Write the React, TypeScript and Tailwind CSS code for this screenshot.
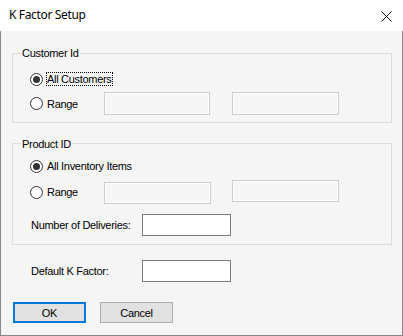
import React from "react";

const Radio = ({ checked }: { checked?: boolean }) => (
  <span className="w-[13px] h-[13px] rounded-full border border-[#333333] bg-white flex items-center justify-center shrink-0">
    {checked && <span className="w-[7px] h-[7px] rounded-full bg-[#333333]" />}
  </span>
);

const DisabledBox = ({ w, extra = "" }: { w: string; extra?: string }) => (
  <div className={`${w} ${extra} border border-[#cccccc] shrink-0`}>
    <div className="w-full h-full border border-white bg-[#f5f5f5]" />
  </div>
);

export default function App() {
  return (
    <div
      className="w-[403px] h-[336px] bg-[#f5f5f5] flex flex-col text-[11px] text-black tracking-[-0.3px]"
      style={{ fontFamily: '"Liberation Sans", Arial, sans-serif' }}
    >
      {/* Title bar */}
      <div className="h-[31px] bg-white flex items-center shrink-0 relative">
        <span
          className="pl-[9px] text-[12px] tracking-[-0.35px] leading-[16px] -mt-[1px]"
          style={{ fontFamily: '"Segoe UI", "Noto Sans", sans-serif' }}
        >
          K Factor Setup
        </span>
        <svg
          className="absolute left-[381px] top-[11px]"
          width="11"
          height="11"
          viewBox="0 0 11 11"
        >
          <path d="M0.5 0.5 L10.5 10.5 M10.5 0.5 L0.5 10.5" stroke="#111" strokeWidth="1" />
        </svg>
      </div>

      {/* Body */}
      <div className="flex-1 flex flex-col border-x border-b border-[#888888]">
        {/* Customer Id group */}
        <div className="relative mt-[22px] ml-[11px] w-[380px] h-[70px] border border-[#dcdcdc] flex flex-col">
          <span className="absolute left-[8px] top-[-7px] px-px bg-[#f5f5f5] leading-[13px]">
            Customer Id
          </span>
          <div className="mt-[18px] pl-[17px] h-[14px] flex items-center">
            <Radio checked />
            <span className="ml-[3px] border border-dotted border-black leading-[12px]">
              All Customers
            </span>
          </div>
          <div className="mt-[6px] pl-[17px] h-[23px] flex items-center">
            <Radio />
            <span className="ml-[4px] w-[57px] leading-[14px]">Range</span>
            <DisabledBox w="w-[106px] h-[23px]" />
            <DisabledBox w="w-[107px] h-[23px]" extra="ml-[22px]" />
          </div>
        </div>

        {/* Product ID group */}
        <div className="relative mt-[20px] ml-[11px] w-[380px] h-[102px] border border-[#dcdcdc] flex flex-col">
          <span className="absolute left-[8px] top-[-6px] px-px bg-[#f5f5f5] leading-[13px]">
            Product ID
          </span>
          <div className="mt-[15px] pl-[17px] h-[14px] flex items-center">
            <Radio checked />
            <span className="ml-[4px] leading-[14px]">All Inventory Items</span>
          </div>
          <div className="mt-[7px] pl-[17px] h-[24px] flex items-start">
            <div className="h-[24px] flex items-center">
              <Radio />
              <span className="ml-[4px] w-[57px] leading-[14px]">Range</span>
            </div>
            <DisabledBox w="w-[107px] h-[22px]" extra="mt-[2px]" />
            <DisabledBox w="w-[107px] h-[22px]" extra="ml-[21px]" />
          </div>
          <div className="mt-[10px] pl-[18px] h-[22px] flex items-center">
            <span className="w-[111px] leading-[14px]">Number of Deliveries:</span>
            <div className="w-[89px] h-[22px] border border-[#7a7a7a] bg-white" />
          </div>
        </div>

        {/* Default K Factor */}
        <div className="mt-[15px] pl-[30px] h-[22px] flex items-center">
          <span className="w-[111px] leading-[14px]">Default K Factor:</span>
          <div className="w-[89px] h-[22px] border border-[#7a7a7a] bg-white" />
        </div>

        {/* Buttons */}
        <div className="mt-[20px] pl-[12px] flex">
          <button className="w-[73px] h-[21px] border-2 border-[#0078d7] bg-[#e1e1e1] flex items-center justify-center leading-[14px]">
            OK
          </button>
          <button className="ml-[14px] w-[73px] h-[21px] border border-[#adadad] bg-[#e1e1e1] flex items-center justify-center leading-[14px]">
            Cancel
          </button>
        </div>
      </div>
    </div>
  );
}
